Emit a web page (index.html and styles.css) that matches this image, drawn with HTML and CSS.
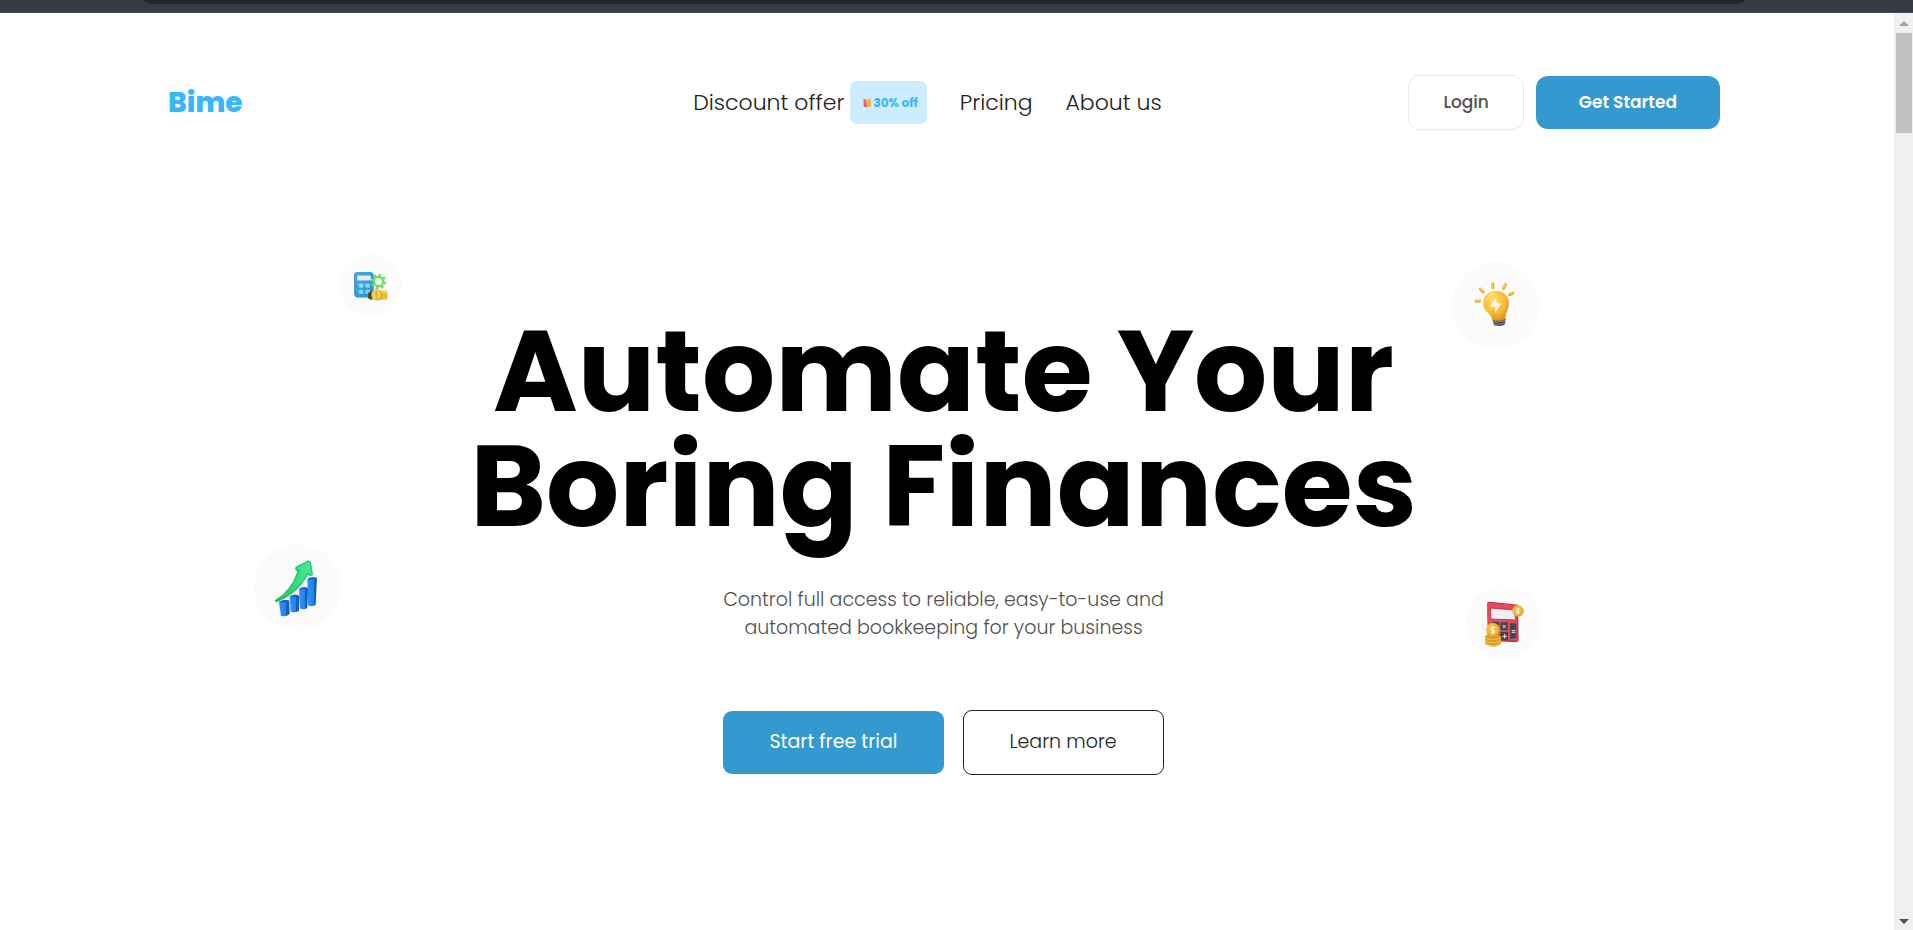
FILE: index.html
```html
<!DOCTYPE html>
<html lang="en">
<head>
<meta charset="utf-8">
<meta name="viewport" content="width=device-width, initial-scale=1">
<title>Bime</title>
<link rel="stylesheet" href="styles.css">
</head>
<body>
<div class="chrome" aria-hidden="true"><div class="chrome-field"></div></div>
<div class="viewport">
  <div class="page">
    <header class="header">
      <a class="brand" href="#">Bime</a>
      <nav class="nav">
        <a class="nav-link" href="#offer">Discount offer
          <span class="badge">
            <svg class="badge-icon" viewBox="0 0 30 32" aria-hidden="true">
              <path d="M1 1l5 5M26 24l3 5" stroke="#f3c5cf" stroke-width="3"/>
              <path d="M4 8l9-3 3 25-10-2z" fill="#ef5d8a"/>
              <path d="M5 20l9-1 2 11-10-2z" fill="#d9577a"/>
              <path d="M10 5l6 5 8-7 1 20-10 4z" fill="#fbc02d"/>
              <path d="M21 7l4-4 1 24-10 3 6-8z" fill="#f39a4b"/>
            </svg>30% off</span>
        </a>
        <a class="nav-link" href="#pricing">Pricing</a>
        <a class="nav-link" href="#about">About us</a>
      </nav>
      <div class="actions">
        <button class="btn btn-login" type="button">Login</button>
        <button class="btn btn-start" type="button">Get Started</button>
      </div>
    </header>
    <main class="hero">
      <h1 class="title">Automate Your<br>Boring Finances</h1>
      <p class="lead">Control full access to reliable, easy-to-use and<br>automated bookkeeping for your business</p>
      <div class="cta">
        <button class="btn btn-trial" type="button">Start free trial</button>
        <button class="btn btn-more" type="button">Learn more</button>
      </div>

      <svg class="float float-budget" viewBox="30 42 187 187" aria-hidden="true">
        <defs>
          <linearGradient id="calcBlue" x1="0" y1="0" x2="1" y2="1"><stop offset="0" stop-color="#43b1ea"/><stop offset="1" stop-color="#248ac9"/></linearGradient>
        </defs>
        <circle cx="123.500" cy="135.500" r="93.500" fill="#fbfbfb"/>
        <path d="M73 105q0-8 8-8h42q8 0 8 8v68H82q-9-2-9-12z" fill="#1c80bf"/>
        <rect x="76" y="98" width="55" height="74" rx="7" fill="url(#calcBlue)"/>
        <rect x="82" y="107" width="41" height="15" rx="3" fill="#e9eaf0"/>
        <g fill="#79cbee"><rect x="86" y="130" width="15" height="14" rx="3"/><rect x="106" y="130" width="15" height="14" rx="3"/><rect x="86" y="149" width="15" height="14" rx="3"/><rect x="106" y="149" width="15" height="14" rx="3"/></g>
        <path d="M90 137h7M93.500 133v8M110 137h7M90 156h7" stroke="#d8f2fc" stroke-width="2"/>
        <circle cx="146" cy="125" r="14" fill="none" stroke="#6be063" stroke-width="7"/>
        <circle cx="146" cy="125" r="20" fill="none" stroke="#6be063" stroke-width="7" stroke-dasharray="8 7.700"/>
        <path d="M115 160l12-7v28l-12-5z" fill="#54401f"/>
        <path d="M145 155q0-3 5-3h19q4 0 4 3v22q-2 3-6 3h-22z" fill="#eebb3c"/>
        <path d="M149 153h22l2 5h-25z" fill="#fbd867"/>
        <ellipse cx="141" cy="165" rx="17" ry="17" fill="#dda52d"/>
        <ellipse cx="140" cy="164" rx="14" ry="15" fill="#f8cf54"/>
        <path d="M144 157q-8-2-8 3t6 5q5 3-1 6l-6-1M140 154v21" fill="none" stroke="#d7a438" stroke-width="2"/>
      </svg>

      <svg class="float float-idea" viewBox="37 36 261 261" aria-hidden="true">
        <defs>
          <radialGradient id="bulb" cx=".4" cy=".3" r=".75"><stop offset="0" stop-color="#ffdf69"/><stop offset=".6" stop-color="#f5bb33"/><stop offset="1" stop-color="#df8d16"/></radialGradient>
        </defs>
        <circle cx="167.500" cy="166.500" r="130.500" fill="#fbfbfb"/>
        <g stroke="#e9a62a" stroke-width="9" stroke-linecap="round"><path d="M109 153h11M122 117l9 9M159 101l1 12M197 104l-5 11M220 129l-10 5"/></g>
        <g stroke="#ffd45c" stroke-width="4" stroke-linecap="round"><path d="M109 151h10M122 115l9 8M158 101l1 10M196 103l-4 9M220 127l-10 4"/></g>
        <path d="M157 204l41 2-3 18q-15 7-32 2z" fill="#4c4c57"/>
        <path d="M161 215q17 4 35-4M163 222q17 4 32-4" stroke="#85858f" stroke-width="3" fill="none"/>
        <path d="M131 164c-2-26 15-41 38-41 25 0 41 18 39 40-2 20-10 24-11 44-12 7-29 7-40 2-3-22-24-22-26-45z" fill="url(#bulb)"/>
        <path d="M158 181q6 18 4 28" stroke="#e59b1c" stroke-width="4" fill="none" opacity=".6"/>
        <path d="M168 143l-17 26 16 2-1 17 19-27-13-2z" fill="#f7f2e7"/>
        <path d="M143 148q7-17 23-18" stroke="#ffe88f" stroke-width="6" stroke-linecap="round" fill="none" opacity=".7"/>
      </svg>

      <svg class="float float-growth" viewBox="42 41 261 261" aria-hidden="true">
        <defs>
          <linearGradient id="bar" x1="0" y1="0" x2="1" y2="0"><stop offset="0" stop-color="#2f94f2"/><stop offset=".65" stop-color="#2583e5"/><stop offset=".68" stop-color="#1763c2"/><stop offset="1" stop-color="#1659b5"/></linearGradient>
          <linearGradient id="arrow" x1="0" y1="1" x2="1" y2="0"><stop offset="0" stop-color="#20b765"/><stop offset=".5" stop-color="#38dd82"/><stop offset="1" stop-color="#45eb96"/></linearGradient>
        </defs>
        <circle cx="172.500" cy="171.500" r="130.500" fill="#fbfbfb"/>
        <g fill="url(#bar)">
          <path d="M202 146q12-9 29-3l-4 80q-11 8-23 2z"/>
          <path d="M177 175q12-8 27-2l-2 59q-10 8-22 2z"/>
          <path d="M149 198q13-8 29-2l-1 45q-12 8-25 3z"/>
          <path d="M117 215q15-10 31-4l1 40q-10 9-26 6z"/>
        </g>
        <g fill="#1661c5"><path d="M202 146q12-9 29-3-10 6-29 3M177 175q12-8 27-2-9 6-27 2M149 198q13-8 29-2-11 7-29 2M117 215q15-10 31-4-12 8-31 4"/></g>
        <path d="M105 210Q153 180 172 124l-7-8 2-7 38-19 8 4 6 40-8 4-7-5Q172 191 110 216l-5-2z" fill="#27c36d"/>
        <path d="M107 209Q158 180 180 119l-12-5 40-22 8 41-14-5Q170 187 107 212z" fill="url(#arrow)"/>
      </svg>

      <svg class="float float-calc" viewBox="48 46 225 225" aria-hidden="true">
        <defs>
          <linearGradient id="coin" x1="0" y1="0" x2="1" y2="1"><stop offset="0" stop-color="#fbd050"/><stop offset="1" stop-color="#d99320"/></linearGradient>
        </defs>
        <circle cx="160.500" cy="158.500" r="112.500" fill="#fbfbfb"/>
        <path d="M112 98l8-2 84 9 2 108-7 5-85-5z" fill="#b82f40"/>
        <path d="M116 99l84 8 3 106-89-4-3-106q0-4 5-4z" fill="#e54a5a"/>
        <path d="M122 115l72 6 3 30-75-3z" fill="#f0f0f4" stroke="#c43b4a" stroke-width="3"/>
        <path d="M151 158h22v24h-22zM151 187h23v24h-23zM127 157h20v25h-20zM180 160l19 2v44l-18 2z" fill="#464450"/>
        <path d="M158 166l9 9M167 166l-9 9M157 200h14M164 193v14M185 183h11M185 188h11" stroke="#ececf0" stroke-width="3"/>
        <circle cx="204" cy="124" r="17" fill="url(#coin)"/><circle cx="204" cy="124" r="12" fill="#edba47"/>
        <path d="M210 118q-10-4-11 2t8 5q3 7-9 4M205 114v20" fill="none" stroke="#fff2cb" stroke-width="3"/>
        <path d="M105 199q22-12 48 0v24q-22 16-46 1z" fill="#d99a24"/>
        <path d="M106 204q22 12 47 0M106 213q22 12 47 0M107 222q22 12 45 0" fill="none" stroke="#f0be42" stroke-width="4"/>
        <circle cx="129" cy="181" r="21" fill="url(#coin)"/><circle cx="129" cy="181" r="15" fill="#edb941"/>
        <path d="M135 174q-11-4-12 3t9 5q4 9-9 7M129 168v26" fill="none" stroke="#fff2cb" stroke-width="4"/>
        <g fill="#eeeef0"><circle cx="97" cy="168" r="4"/><circle cx="101" cy="179" r="4"/><circle cx="211" cy="146" r="3"/></g>
      </svg>
    </main>
  </div>
  <div class="scrollbar" aria-hidden="true">
    <svg class="scroll-arrow" viewBox="0 0 10 5"><path d="M5 0l5 5H0z" fill="#a3a3a3"/></svg>
    <div class="scroll-thumb"></div>
    <svg class="scroll-arrow scroll-down" viewBox="0 0 10 5"><path d="M0 0h10L5 5z" fill="#505050"/></svg>
  </div>
</div>
</body>
</html>
```
FILE: styles.css
```css
* {
  box-sizing: border-box;
}

body {
  margin: 0;
  min-height: 100vh;
  display: flex;
  flex-direction: column;
  background: #fff;
  color: #212121;
  font-family: Poppins, Inter, sans-serif;
}

.chrome {
  height: 13px;
  padding: 0 168px 0 144px;
  background: #393b44;
  border-bottom: 1px solid #4a4a50;
}

.chrome-field {
  height: 4px;
  border-radius: 0 0 12px 12px / 0 0 4px 4px;
  background: #23262e;
}

.viewport {
  flex: 1;
  display: flex;
}

.page {
  flex: 1;
  min-width: 0;
}

.header {
  display: grid;
  grid-template-columns: 1fr auto 1fr;
  align-items: center;
  padding: 62px 174px 0 168px;
}

.brand {
  justify-self: start;
  color: #38b6ff;
  font-size: 28px;
  font-weight: 800;
  text-decoration: none;
}

.nav {
  display: flex;
  align-items: center;
}

.nav-link {
  display: flex;
  align-items: center;
  gap: 6px;
  margin-right: 33px;
  color: #212121;
  font-size: 22px;
  font-weight: 300;
  text-decoration: none;
}

.badge {
  display: flex;
  align-items: center;
  gap: 1px;
  height: 43px;
  padding: 0 9px 0 12px;
  border-radius: 7px;
  background: #cdedff;
  color: #38b6ff;
  font-size: 12px;
  font-weight: 700;
}

.badge-icon {
  width: 10px;
  height: 11px;
}

.actions {
  justify-self: end;
  display: flex;
  align-items: center;
  gap: 12px;
}

.btn {
  border: 0;
  background: #fff;
  font-family: inherit;
  white-space: nowrap;
  cursor: pointer;
}

.btn-login {
  height: 55px;
  padding: 0 34px 1px;
  border: 1px solid #e8e8ee;
  border-radius: 12px;
  color: #505050;
  font-size: 17px;
  font-weight: 500;
}

.btn-start {
  height: 53px;
  padding: 0 43px 1px;
  border-radius: 12px;
  background: #3399cf;
  color: #fff;
  font-size: 17px;
  font-weight: 600;
}

.hero {
  position: relative;
  padding: 183px 174px 0 167px;
  text-align: center;
}

.title {
  margin: 0;
  color: #000;
  font-size: 115px;
  font-weight: 700;
  line-height: 115px;
}

.lead {
  margin: 43px 0 0;
  color: #505050;
  font-size: 19px;
  font-weight: 300;
  line-height: 28px;
}

.cta {
  display: flex;
  justify-content: center;
  align-items: center;
  gap: 19px;
  margin-top: 68px;
}

.btn-trial {
  height: 63px;
  padding: 0 46px 2px;
  border-radius: 9px;
  background: #3399cf;
  color: #fff;
  font-size: 19px;
  font-weight: 400;
}

.btn-more {
  height: 65px;
  padding: 0 46px 2px;
  border: 1px solid #212121;
  border-radius: 9px;
  color: #212121;
  font-size: 19px;
  font-weight: 300;
}

.float {
  position: absolute;
}

.float-budget {
  top: 124px;
  left: 340px;
  width: 62px;
}

.float-idea {
  top: 132px;
  right: 355px;
  width: 87px;
}

.float-growth {
  top: 414px;
  left: 254px;
  width: 87px;
}

.float-calc {
  top: 455px;
  right: 353px;
  width: 75px;
}

.scrollbar {
  flex: none;
  display: flex;
  flex-direction: column;
  align-items: center;
  width: 19px;
  padding: 8px 1px 6px 2px;
  background: #f0f0f0;
}

.scroll-arrow {
  width: 10px;
  height: 5px;
}

.scroll-thumb {
  width: 100%;
  height: 100px;
  margin-top: 7px;
  background: #c1c1c1;
}

.scroll-down {
  margin-top: auto;
}
```
